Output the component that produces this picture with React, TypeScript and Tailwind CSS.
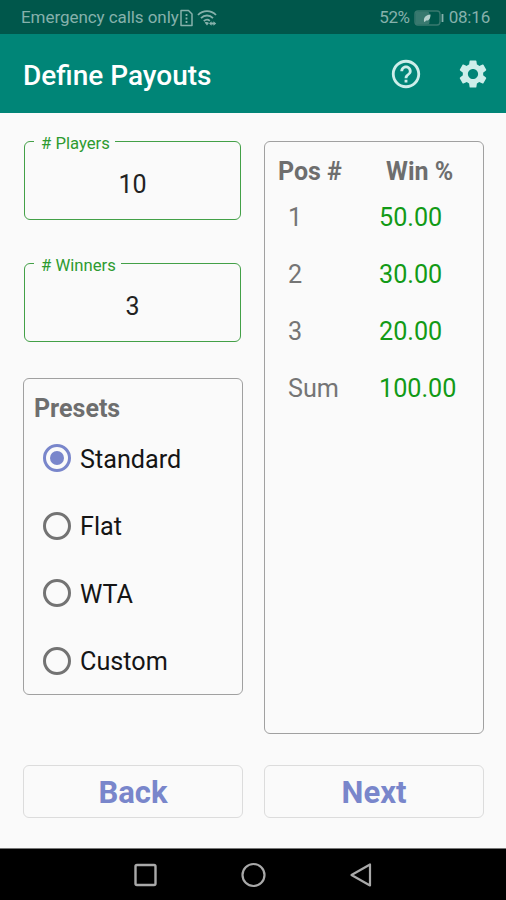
import { MdHelpOutline, MdSettings } from 'react-icons/md';

const PRESETS = ['Standard', 'Flat', 'WTA', 'Custom'];

const PAYOUTS = [
  { pos: '1', win: '50.00' },
  { pos: '2', win: '30.00' },
  { pos: '3', win: '20.00' },
  { pos: 'Sum', win: '100.00' },
];

const StatusBar = () => (
  <div className="flex h-[34px] items-center bg-[#00574b] pl-[21px] pr-[16px] pt-[2px] text-[17px] text-[#86b1ab]">
    <span className="tracking-[-0.06px]">Emergency calls only</span>
    <svg className="ml-[1px] h-[18px] w-[13px]" viewBox="0 0 13 18" fill="none" stroke="currentColor" strokeWidth="1.5">
      <path d="M1 1.5h7.5L12 5v11.5H1z" strokeLinejoin="round" />
      <path d="M6.5 5v2M6.5 8.5v2M6.5 12v2" strokeWidth="1.8" />
    </svg>
    <svg className="ml-[4px] h-[18px] w-[20px]" viewBox="0 0 20 18" fill="none" stroke="currentColor" strokeWidth="1.8">
      <path d="M1 6C6 .8 14 .8 19 6M4 9.2c3.4-3.6 8.6-3.6 12 0M6.8 12.2c1.8-1.8 4.2-2 6-.4" />
      <path d="M7.6 13.6l2.4 2.8 2-2.4c-1.2-1-3-1.200-4.400-.4z" fill="currentColor" stroke="none" />
      <path d="M12 14.500l2.500-2.200v1.200h2v-1.200l2.700 2.200-2.700 2.200v-1.200h-2v1.200z" fill="currentColor" stroke="none" />
    </svg>
    <span className="ml-auto tracking-[-0.4px]">52%</span>
    <svg className="ml-[4px] h-[16px] w-[30px]" viewBox="0 0 30 16" fill="none">
      <rect x="1" y="1" width="25" height="14" rx="3" stroke="#39796f" strokeWidth="1.4" />
      <rect x="1.5" y="1.5" width="14" height="13" rx="2.5" fill="#39796f" />
      <path d="M10 11.500c-.5-4 1.500-6.500 6.500-7 0 4-1.500 6.500-4.500 6l-1.200 1.500z" fill="#b5d0cc" />
      <path d="M28.500 4v8" stroke="#86b1ab" strokeWidth="1.8" />
    </svg>
    <span className="ml-[5px] tracking-[-0.2px]">08:16</span>
  </div>
);

const NumberField = ({ label, value }: { label: string; value: string }) => (
  <div className="relative ml-px mr-[2px] flex h-[79px] items-center justify-center rounded-[6px] border border-[#43a047] pt-[8px]">
    <span className="absolute left-[9px] top-[-9px] bg-[#fafafa] pl-[7px] pr-[5px] text-[16.7px] leading-[22px] text-[#2d9a30]">
      {label}
    </span>
    <span className="text-[25px] text-[#222]">{value}</span>
  </div>
);

const Radio = ({ label, checked }: { label: string; checked: boolean }) => (
  <div className="flex h-[67.5px] items-center">
    <span className={`mb-[3px] flex size-[28px] items-center justify-center rounded-full border-3 ${checked ? 'border-[#7986cb]' : 'border-[#737373]'}`}>
      {checked && <span className="size-[14px] rounded-full bg-[#7986cb]" />}
    </span>
    <span className="ml-[9px] text-[25.2px] text-[#151515]">{label}</span>
  </div>
);

const NavBar = () => (
  <div className="flex h-[52px] items-center justify-center gap-[82px] border-t border-[#777] bg-black text-[#a9a9a9]">
    <svg className="size-[26px]" viewBox="0 0 26 26" fill="none" stroke="currentColor" strokeWidth="2.4">
      <rect x="3.5" y="3" width="20" height="20" rx="1.5" />
    </svg>
    <svg className="size-[26px]" viewBox="0 0 26 26" fill="none" stroke="currentColor" strokeWidth="2.2">
      <circle cx="13.5" cy="13" r="11" />
    </svg>
    <svg className="size-[26px]" viewBox="0 0 26 26" fill="none" stroke="currentColor" strokeWidth="2.2" strokeLinejoin="round">
      <path d="M22 2.500v21L3.500 13z" />
    </svg>
  </div>
);

export default function App() {
  return (
    <div className="flex h-[900px] w-[506px] flex-col overflow-hidden bg-[#fafafa] font-['Roboto',sans-serif]">
      <StatusBar />
      <header className="flex h-[79px] items-center bg-[#008577] pl-[23px] pr-[16px]">
        <h1 className="pt-[4px] text-[28px] font-medium text-white">Define Payouts</h1>
        <MdHelpOutline className="ml-auto size-[34px] text-[#cdeeea]" />
        <MdSettings className="ml-[33px] size-[34px] text-[#cdeeea]" />
      </header>

      <main className="grid flex-1 grid-cols-[220px_220px] grid-rows-[593px_53px] gap-x-[21px] gap-y-[31px] pl-[23px] pt-[28px]">
        <div className="flex flex-col">
          <NumberField label="# Players" value="10" />
          <div className="h-[43px]" />
          <NumberField label="# Winners" value="3" />
          <section className="mt-[36px] h-[317px] rounded-[6px] border border-[#a0a0a0] pl-[10px] pt-[13px]">
            <h2 className="text-[25px] font-bold leading-[34px] text-[#6e6e6e]">Presets</h2>
            <div className="pl-[9px]">
              {PRESETS.map((p) => (
                <Radio key={p} label={p} checked={p === 'Standard'} />
              ))}
            </div>
          </section>
        </div>

        <section className="rounded-[6px] border border-[#a0a0a0] pl-[13px] pt-[13px]">
          <div className="grid grid-cols-[108px_1fr] text-[25px] font-bold leading-[34px] text-[#6e6e6e]">
            <span>Pos #</span>
            <span>Win %</span>
          </div>
          {PAYOUTS.map((row) => (
            <div key={row.pos} className="grid h-[57px] grid-cols-[91px_1fr] pl-[10px] text-[25.2px] leading-[57px]">
              <span className="text-[#757575]">{row.pos}</span>
              <span className="text-[#129a16]">{row.win}</span>
            </div>
          ))}
        </section>

        <button className="rounded-[6px] border border-[#dcdcdc] pt-[4px] text-[31px] font-bold text-[#7986cb]">Back</button>
        <button className="rounded-[6px] border border-[#dcdcdc] pt-[4px] text-[31px] font-bold text-[#7986cb]">Next</button>
      </main>
      <NavBar />
    </div>
  );
}
